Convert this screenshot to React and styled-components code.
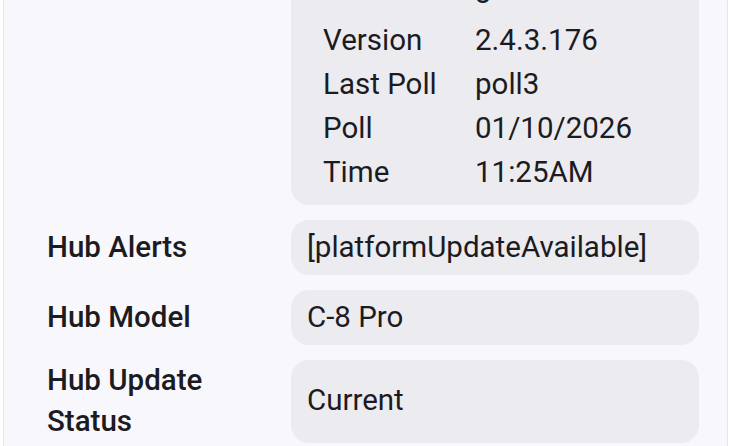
import React from "react";
import styled, { createGlobalStyle } from "styled-components";

const Global = createGlobalStyle`
  html, body { margin: 0; padding: 0; background: #ffffff; overflow: hidden; }
  body { font-family: Roboto, "Noto Sans", Arial, sans-serif; color: #1c1b1f; }
`;

const Viewport = styled.div`
  height: 446px;
  overflow: hidden;
`;

const Panel = styled.section`
  margin: -88px 1px 0 3px;
  border-left: 1px solid #e6e6ec;
  border-right: 1px solid #e6e6ec;
  background: #f7f7fc;
  padding: 0 28px 40px 43px;
  display: grid;
  grid-template-columns: 228px 1fr;
  column-gap: 16px;
  row-gap: 14.5px;
`;

const Label = styled.div`
  font-size: 29.5px;
  font-weight: 500;
  line-height: 41.5px;
  align-self: ${(p) => (p.$top ? "start" : "center")};
  padding-top: ${(p) => (p.$top ? "9px" : "0")};
`;

const Value = styled.div`
  background: #ebebf0;
  border-radius: 18px;
  padding: ${(p) => (p.$nested ? "9px 16px 11px 32px" : "8px 16px")};
  font-size: 29.5px;
  line-height: 39.5px;
  display: flex;
  align-items: center;
`;

const InfoTable = styled.div`
  display: grid;
  grid-template-columns: 152px 1fr;
`;

const Cell = styled.span`
  white-space: nowrap;
  line-height: 44px;
  padding-bottom: ${(p) => p.$extra || 0}px;
`;

const info = [
  ["Name", "Home Hub", 0],
  ["Status", "good", 9],
  ["Version", "2.4.3.176", 0],
  ["Last Poll", "poll3", 0],
  ["Poll", "01/10/2026", 0],
  ["Time", "11:25AM", 0],
];

const rows = [
  ["Hub Alerts", "[platformUpdateAvailable]"],
  ["Hub Model", "C-8 Pro"],
  ["Hub Update Status", "Current"],
];

export default function App() {
  return (
    <>
      <Global />
      <Viewport>
        <Panel>
          <Label $top>Hub Info</Label>
          <Value $nested>
            <InfoTable>
              {info.map(([k, v, extra]) => (
                <React.Fragment key={k}>
                  <Cell $extra={extra}>{k}</Cell>
                  <Cell $extra={extra}>{v}</Cell>
                </React.Fragment>
              ))}
            </InfoTable>
          </Value>
          {rows.map(([k, v]) => (
            <React.Fragment key={k}>
              <Label>{k}</Label>
              <Value>{v}</Value>
            </React.Fragment>
          ))}
        </Panel>
      </Viewport>
    </>
  );
}
